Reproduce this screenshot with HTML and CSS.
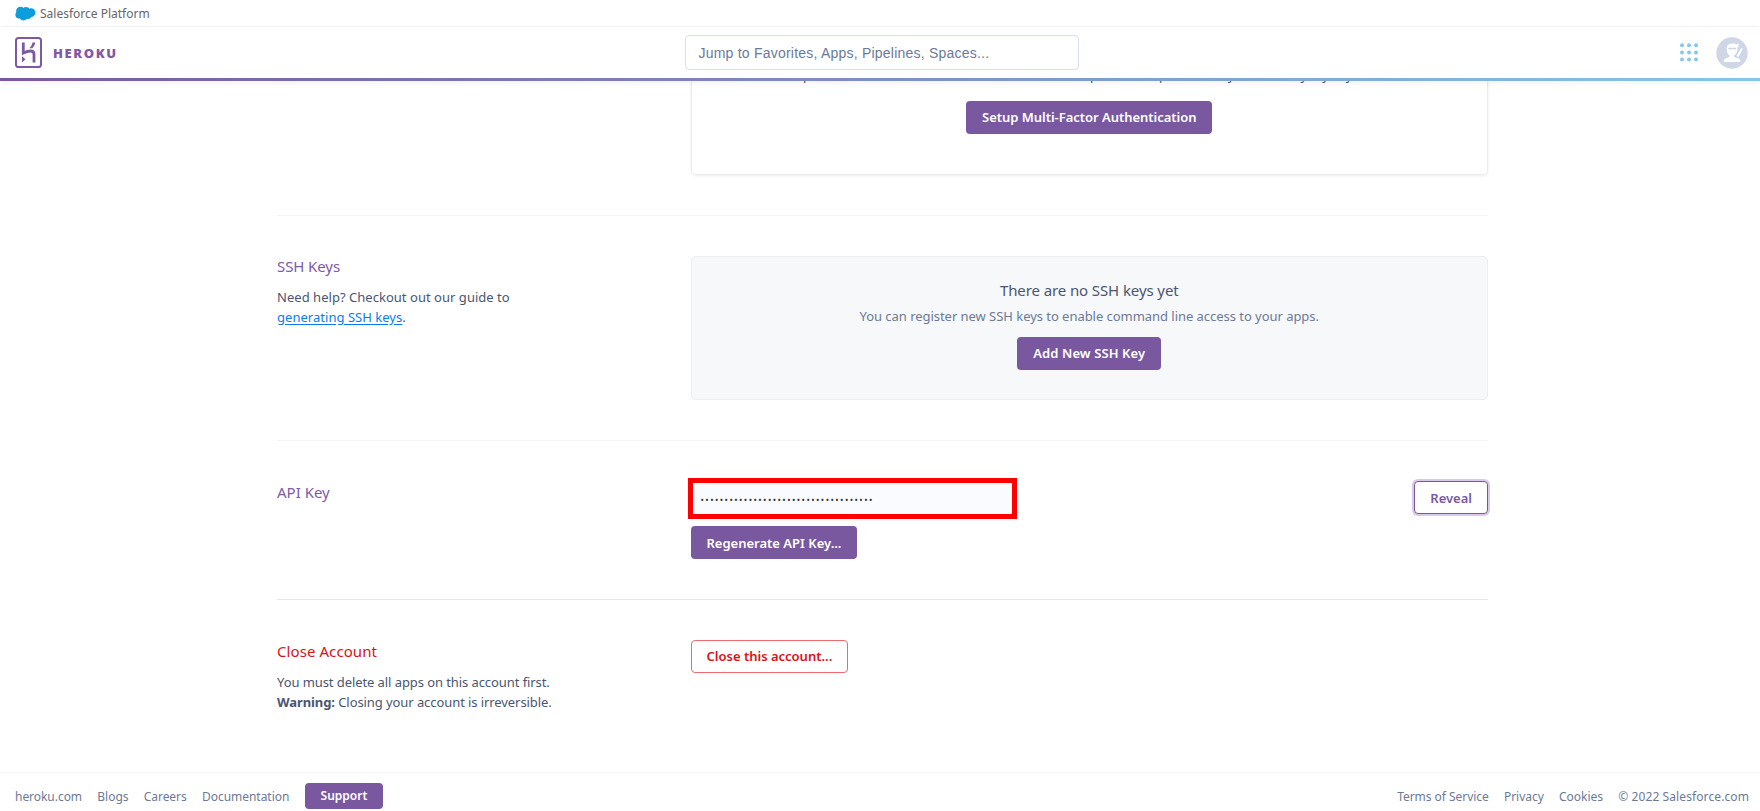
FILE: index.html
```html
<!DOCTYPE html>
<html lang="en">
<head>
    <meta charset="UTF-8">
    <title>Account | Heroku</title>
    <link rel="stylesheet" href="styles.css">
</head>
<body>
    <div class="platform-bar">
        <svg class="cloud" width="21" height="15" viewBox="0 0 21 15">
            <g fill="#0d9dda">
                <circle cx="5.4" cy="5" r="4.3"/>
                <circle cx="11" cy="4.4" r="3.4"/>
                <circle cx="16" cy="6.6" r="4.4"/>
                <circle cx="4" cy="8.8" r="3.6"/>
                <circle cx="8.5" cy="10.3" r="4.1"/>
                <circle cx="13" cy="9.6" r="3.4"/>
            </g>
        </svg>
        <span>Salesforce Platform</span>
    </div>
    <header class="header">
        <a class="brand">
            <svg width="27" height="31" viewBox="0 0 27 31" fill="none" stroke="#7d59a4">
                <rect x="1" y="1" width="25" height="29" rx="2.6" stroke-width="2"/>
                <path d="M8.3 5.5V16C11 14.7 13.5 14 15.7 14C18.3 14 19 15.2 19 17.2V25.5" stroke-width="2.8"/>
                <path d="M7 19.2L10.4 22.3L7 25.5Z" fill="#7d59a4" stroke="none"/>
                <path d="M17.4 5.5H20.2C20 7.8 19 9.6 17.2 11.2H14.5C16.2 9.4 17.2 7.6 17.4 5.5Z" fill="#7d59a4" stroke="none"/>
            </svg>
            <span class="wordmark">HEROKU</span>
        </a>
        <div class="search">Jump to Favorites, Apps, Pipelines, Spaces...</div>
        <div class="tools">
            <svg width="18" height="19" viewBox="0 0 18 19" fill="#86c7ea">
                <circle cx="2" cy="2.2" r="2"/><circle cx="9" cy="2.2" r="2"/><circle cx="16" cy="2.2" r="2"/>
                <circle cx="2" cy="9.4" r="2"/><circle cx="9" cy="9.4" r="2"/><circle cx="16" cy="9.4" r="2"/>
                <circle cx="2" cy="16.6" r="2"/><circle cx="9" cy="16.6" r="2"/><circle cx="16" cy="16.6" r="2"/>
            </svg>
            <svg width="32" height="32" viewBox="0 0 32 32">
                <circle cx="16" cy="16" r="15.7" fill="#cfd7e6"/>
                <g fill="#fff">
                    <path d="M11.2 8.500C12.5 6.300 19 5.800 20.500 7.300L23 6.400L22 8.400L23.500 9.400L21.500 10C21.700 14 20 17.500 18 18.300V20L22.500 21.400C24 22 24.600 23.300 24.500 25H7.800C7.600 23.300 8 22 9.500 21.400L13.500 20V18.300C11 17 10 12 11.200 8.500Z"/>
                    <path d="M20.500 19L25.300 11L26.800 11.800L22.600 20Z"/>
                </g>
                <path d="M12.300 10.700H20V11.900C18.500 12.800 17.500 12.400 16.300 11.900C15 12.500 13.500 12.800 12.300 11.900Z" fill="#cfd7e6"/>
            </svg>
        </div>
    </header>

    <main class="account">
        <section class="row mfa">
            <div class="info"></div>
            <div class="content card">
                <p class="mfa-text">Set up an extra verification method that is needed to protect the password by the security my key at home</p>
                <button class="btn">Setup Multi-Factor Authentication</button>
            </div>
        </section>

        <section class="row ssh">
            <div class="info">
                <h2>SSH Keys</h2>
                <p>Need help? Checkout out our guide to<br><a>generating SSH keys</a>.</p>
            </div>
            <div class="content empty">
                <h3>There are no SSH keys yet</h3>
                <p>You can register new SSH keys to enable command line access to your apps.</p>
                <button class="btn">Add New SSH Key</button>
            </div>
        </section>

        <section class="row">
            <div class="info">
                <h2>API Key</h2>
            </div>
            <div class="content api">
                <div>
                    <div class="key">••••••••••••••••••••••••••••••••••••</div>
                    <button class="btn">Regenerate API Key...</button>
                </div>
                <button class="btn outline">Reveal</button>
            </div>
        </section>

        <section class="row close">
            <div class="info">
                <h2>Close Account</h2>
                <p>You must delete all apps on this account first.<br><b>Warning:</b> Closing your account is irreversible.</p>
            </div>
            <div class="content">
                <button class="btn danger">Close this account...</button>
            </div>
        </section>
    </main>

    <footer class="footer">
        <nav>
            <a>heroku.com</a>
            <a>Blogs</a>
            <a>Careers</a>
            <a>Documentation</a>
            <button class="btn small">Support</button>
        </nav>
        <nav>
            <a>Terms of Service</a>
            <a>Privacy</a>
            <a>Cookies</a>
            <span class="copyright">© 2022 Salesforce.com</span>
        </nav>
    </footer>
</body>
</html>
```
FILE: styles.css
```css
* {
    box-sizing: border-box;
}

body {
    margin: 0;
    height: 811px;
    overflow: hidden;
    display: flex;
    flex-direction: column;
    background-color: #fff;
    color: #4a5670;
    font-family: "Noto Sans", "Open Sans", sans-serif;
    font-size: 13px;
}

h2, h3, p {
    margin: 0;
    font-weight: 400;
}

/* top bars */
.platform-bar {
    height: 27px;
    display: flex;
    align-items: center;
    gap: 4px;
    padding-left: 15px;
    border-bottom: 1px solid #f5f5f6;
    color: #666;
    font-size: 12px;
}

.header {
    position: relative;
    z-index: 1;
    height: 54px;
    display: flex;
    align-items: center;
    justify-content: space-between;
    padding: 0 12px 3px 15px;
    background: linear-gradient(90deg, #7a589f, #84c6ea) bottom / 100% 3px no-repeat, #fff;
    box-shadow: 0 2px 6px rgba(0, 0, 0, 0.06);
}

.brand, .tools {
    width: 400px;
    display: flex;
    align-items: center;
}

.brand {
    gap: 11px;
}

.tools {
    justify-content: flex-end;
    gap: 18px;
}

.wordmark {
    color: #8259a8;
    font-family: "Open Sans", sans-serif;
    font-size: 13px;
    font-weight: 800;
    letter-spacing: 1.6px;
}

.search {
    width: 394px;
    height: 35px;
    padding-left: 13px;
    border: 1px solid #d8e0ee;
    border-radius: 4px;
    color: #6b7a99;
    font: 14px/35px "Liberation Sans", sans-serif;
    letter-spacing: 0.22px;
}

/* account settings */
.account {
    flex: 1;
    width: 1211px;
    margin-left: 277px;
}

.row {
    display: flex;
    padding: 40px 0;
    border-top: 1px solid #f4f4f6;
}

.info {
    width: 413.5px;
}

.info h2 {
    color: #8259a8;
    font-size: 15px;
    line-height: 22px;
}

.info p {
    margin-top: 10px;
    line-height: 20px;
    letter-spacing: -0.08px;
}

.info a {
    color: #0a7cf0;
    text-decoration: underline;
    text-underline-offset: 2px;
}

.content {
    flex: 1;
}

.btn {
    height: 33px;
    padding: 0 16px 1px;
    border: 0;
    border-radius: 4px;
    background-color: #79589f;
    color: #fff;
    font: 600 13px "Noto Sans", sans-serif;
}

.mfa {
    padding-top: 0;
    border-top: 0;
}

.card {
    height: 94px;
    text-align: center;
    border: 1px solid #e9ebee;
    border-top: 0;
    border-radius: 0 0 5px 5px;
    box-shadow: 0 1px 3px rgba(0, 0, 0, 0.08);
}

.card .btn {
    letter-spacing: -0.03px;
}

.mfa-text {
    height: 20px;
    margin-top: -16px;
    margin-bottom: 16px;
    line-height: 20px;
    letter-spacing: -0.14px;
}

.ssh h2 {
    margin-top: -1px;
    letter-spacing: -0.1px;
}

.ssh .info p {
    margin-top: 11px;
    line-height: 19.5px;
    letter-spacing: 0.03px;
}

.empty {
    height: 144px;
    padding-top: 21px;
    text-align: center;
    background-color: #f7f8fa;
    border: 1px solid #eceef1;
    border-radius: 5px;
}

.empty h3 {
    font-size: 15px;
    line-height: 24px;
    letter-spacing: -0.1px;
}

.empty p {
    margin: 3px 0 10px;
    line-height: 22px;
    letter-spacing: -0.04px;
    color: #6b7a99;
}

.empty .btn {
    letter-spacing: 0.1px;
}

.api {
    display: flex;
    justify-content: space-between;
    align-items: flex-start;
}

.api .btn {
    padding-bottom: 0;
}

.key {
    width: 329px;
    height: 41px;
    margin: -3px 0 7px -3px;
    padding-left: 8px;
    border: 5px solid #f00;
    background-color: #fafbfe;
    color: #333;
    font-size: 9px;
    line-height: 33px;
    letter-spacing: 1.43px;
}

.outline {
    padding: 0 15px;
    border: 1px solid #79589f;
    background-color: #fff;
    color: #79589f;
    box-shadow: 0 0 0 2px #d9c8ec;
}

.close {
    border-color: #e6e6f0;
}

.close h2 {
    color: #da1217;
    letter-spacing: 0.08px;
}

.danger {
    padding: 0 15px 1px;
    border: 1px solid #ee6a6c;
    background-color: #fff;
    color: #da1217;
}

.footer {
    height: 39px;
    display: flex;
    align-items: center;
    justify-content: space-between;
    padding: 8px 11px 0 15px;
    border-top: 1px solid #f6f6f8;
    color: #6b7a99;
    font-size: 12px;
    letter-spacing: -0.04px;
}

.footer nav {
    display: flex;
    align-items: center;
    gap: 15.3px;
}

.copyright {
    letter-spacing: 0.1px;
}

.small {
    height: 26px;
    font-size: 12px;
}
```
